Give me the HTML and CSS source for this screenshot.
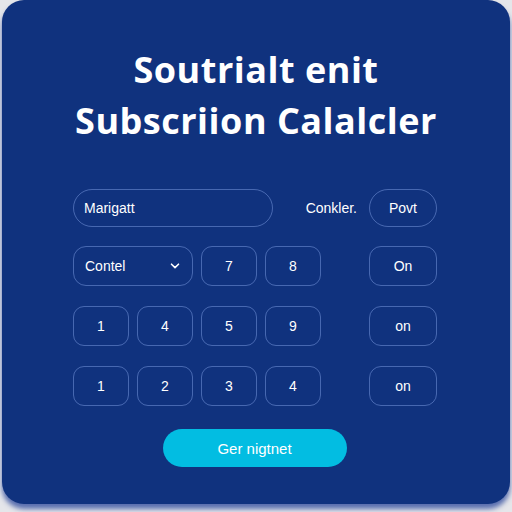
FILE: index.html
```html
<!DOCTYPE html>
<html>
<head>
<meta charset="utf-8">
<title>Subscription Calculator</title>
<meta name="viewport" content="width=device-width">
<link rel="stylesheet" href="styles.css">
</head>
<body>

<div class="card">
	<h1 class="title">Soutrialt enit<br>Subscriion Calalcler</h1>

	<form class="calc">
		<div class="top-row">
			<input type="text" class="field" value="Marigatt">
			<span class="label">Conkler.</span>
			<button type="button" class="key side">Povt</button>
		</div>

		<div class="pad">
			<div class="key select">
				<span>Contel</span>
				<svg width="10" height="6" viewBox="0 0 10 6"><path d="M1.5 1.2 L5 4.6 L8.5 1.2" fill="none" stroke="white" stroke-width="1.6" stroke-linecap="round" stroke-linejoin="round"/></svg>
			</div>
			<button type="button" class="key">7</button>
			<button type="button" class="key">8</button>
			<span></span>
			<button type="button" class="key side">On</button>

			<button type="button" class="key">1</button>
			<button type="button" class="key">4</button>
			<button type="button" class="key">5</button>
			<button type="button" class="key">9</button>
			<span></span>
			<button type="button" class="key side">on</button>

			<button type="button" class="key">1</button>
			<button type="button" class="key">2</button>
			<button type="button" class="key">3</button>
			<button type="button" class="key">4</button>
			<span></span>
			<button type="button" class="key side">on</button>
		</div>

		<div class="actions">
			<button type="button" class="go">Ger nigtnet</button>
		</div>
	</form>
</div>

</body>
</html>
```

FILE: styles.css
```css
html {
	touch-action: manipulation;
}

body {
	margin: 0;
	padding: 0 2px;
	height: 512px;
	background: #e5e6ea;
	font-family: "Liberation Sans", Arial, sans-serif;
	color: white;
}

.card {
	height: 504px;
	box-sizing: border-box;
	padding-top: 44px;
	background: #10327e;
	border-radius: 22px;
	box-shadow: 0 5px 5px rgba(30, 60, 150, 0.7);
}

.title {
	margin: 0;
	text-align: center;
	font-family: "Open Sans", sans-serif;
	font-size: 36px;
	font-weight: 700;
	line-height: 51px;
	letter-spacing: 0.5px;
}

.calc {
	margin: 43px 0 0 71px;
	width: 364px;
}

.top-row {
	display: flex;
	align-items: center;
	height: 38px;
}

.field {
	box-sizing: border-box;
	width: 200px;
	height: 38px;
	padding: 0 10px;
	border: 1px solid rgba(140, 170, 240, 0.45);
	border-radius: 19px;
	background: transparent;
	color: white;
	font-family: inherit;
	font-size: 14px;
	outline: none;
}

.label {
	margin-left: auto;
	margin-right: 12px;
	font-size: 14px;
}

.key {
	box-sizing: border-box;
	height: 40px;
	padding: 0;
	border: 1px solid rgba(140, 170, 240, 0.45);
	border-radius: 11px;
	background: transparent;
	color: white;
	font-family: inherit;
	font-size: 14px;
}

.top-row .side {
	width: 68px;
	height: 38px;
	border-radius: 19px;
}

.pad {
	display: grid;
	grid-template-columns: repeat(4, 56px) 1fr 68px;
	column-gap: 8px;
	row-gap: 20px;
	margin-top: 19px;
}

.side {
	grid-column: 6;
	border-radius: 12px;
}

.select {
	grid-column: span 2;
	display: flex;
	align-items: center;
	justify-content: space-between;
	padding: 0 12px 0 11px;
	border-radius: 13px;
}

.actions {
	display: flex;
	justify-content: center;
	margin: 23px 0 0 -1px;
}

.go {
	width: 184px;
	height: 38px;
	border: none;
	border-radius: 19px;
	background: #02bde2;
	color: white;
	font-family: inherit;
	font-size: 15px;
}
```
